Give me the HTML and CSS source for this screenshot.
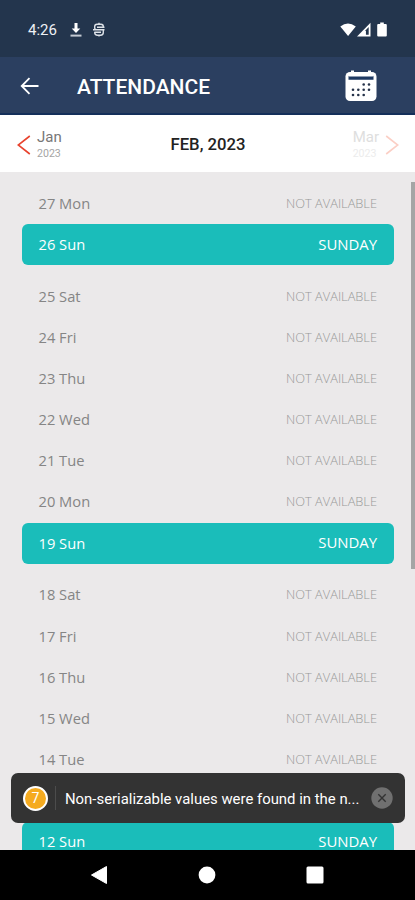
FILE: index.html
```html
<!DOCTYPE html>
<html lang="en">

<head>
  <meta charset="UTF-8">
  <meta name="viewport" content="width=device-width, initial-scale=1.0">
  <title>Attendance</title>
  <link rel="stylesheet" href="styles.css">
</head>

<body>
  <div class="screen">

    <div class="status-bar">
      <span class="time">4:26</span>
      <svg class="download" width="12" height="16" viewBox="0 0 12 16">
        <path d="M4.5 1h3v5.500h2.800L6 11 1.700 6.500h2.800z" fill="#fff" />
        <path d="M.5 13.600h11" stroke="#c3cad3" stroke-width="2" />
      </svg>
      <svg class="sync" width="12" height="16" viewBox="0 0 12 16" fill="none" stroke="#dde2e8" stroke-width="1.400">
        <path d="M10.300 6V4.500Q10.300 2.300 8 2.300H4Q1.700 2.300 1.700 4.500V6Q1.700 7.800 3.500 7.800H10.300V10.500Q10.300 13.200 7.500 13.200H4.500Q1.700 13.200 1.700 10.500V9.800M0 7.800H11.500M4 5.300H11.500M1.700 10.300H8M6 .8V2.300M6 13.200V14.500" />
      </svg>
      <svg class="signal" width="48" height="16" viewBox="0 0 48 16">
        <path d="M.3 4.500Q8 -1.500 15.800 4.500L8.100 14z" fill="#fff" />
        <path d="M30.500.8V14.500H17z" fill="#fff" />
        <path d="M28.700 5v7.800h-3.300V8.500z" fill="#23354d" />
        <path d="M25.400 9v5" stroke="#fff" stroke-width="1" />
        <path d="M40.200.5h3.600v1.500h2q1 0 1 1v10.500q0 1-1 1h-7.600q-1 0-1-1V3q0-1 1-1h2z" fill="#fff" />
      </svg>
    </div>

    <div class="header">
      <svg class="back" width="20" height="18" viewBox="0 0 20 18" fill="none" stroke="#fff" stroke-width="1.800">
        <path d="M18.500 9H2M9.500 1.200L1.700 9l7.800 7.800" />
      </svg>
      <h1>ATTENDANCE</h1>
      <svg class="calendar" width="32" height="32" viewBox="0 0 32 32">
        <rect x=".5" y="2" width="31" height="29" rx="4.500" fill="#fff" />
        <path d="M7.500.5v4M24.500.5v4" stroke="#fff" stroke-width="3" />
        <path d="M3.500 5.500q0 1 1 1h23q1 0 1-1v4.200h-25z" fill="#1e3962" />
        <g fill="#26334a">
          <circle cx="18.700" cy="14.500" r="1.300" /><circle cx="24" cy="14.500" r="1.300" />
          <circle cx="8" cy="19.800" r="1.300" /><circle cx="13.300" cy="19.800" r="1.300" />
          <circle cx="18.700" cy="19.800" r="1.300" /><circle cx="24" cy="19.800" r="1.300" />
          <circle cx="8" cy="25" r="1.300" /><circle cx="13.300" cy="25" r="1.300" />
          <circle cx="18.700" cy="25" r="1.300" />
        </g>
      </svg>
    </div>

    <div class="month-bar">
      <div class="month prev">
        <svg width="14" height="20" viewBox="0 0 14 20" fill="none" stroke="#e8432e" stroke-width="1.600">
          <path d="M12.800 1L1.200 10l11.600 9" />
        </svg>
        <div>
          <p class="name">Jan</p>
          <p class="year">2023</p>
        </div>
      </div>
      <h2>FEB, 2023</h2>
      <div class="month next">
        <div>
          <p class="name">Mar</p>
          <p class="year">2023</p>
        </div>
        <svg width="14" height="20" viewBox="0 0 14 20" fill="none" stroke="#fbcfc5" stroke-width="1.600">
          <path d="M1.200 1l11.600 9L1.200 19" />
        </svg>
      </div>
    </div>

    <div class="list">
      <div class="day"><span>27 Mon</span><span class="status">NOT AVAILABLE</span></div>
      <div class="day sunday"><span>26 Sun</span><span class="status">SUNDAY</span></div>
      <div class="day"><span>25 Sat</span><span class="status">NOT AVAILABLE</span></div>
      <div class="day"><span>24 Fri</span><span class="status">NOT AVAILABLE</span></div>
      <div class="day"><span>23 Thu</span><span class="status">NOT AVAILABLE</span></div>
      <div class="day"><span>22 Wed</span><span class="status">NOT AVAILABLE</span></div>
      <div class="day"><span>21 Tue</span><span class="status">NOT AVAILABLE</span></div>
      <div class="day"><span>20 Mon</span><span class="status">NOT AVAILABLE</span></div>
      <div class="day sunday"><span>19 Sun</span><span class="status">SUNDAY</span></div>
      <div class="day"><span>18 Sat</span><span class="status">NOT AVAILABLE</span></div>
      <div class="day"><span>17 Fri</span><span class="status">NOT AVAILABLE</span></div>
      <div class="day"><span>16 Thu</span><span class="status">NOT AVAILABLE</span></div>
      <div class="day"><span>15 Wed</span><span class="status">NOT AVAILABLE</span></div>
      <div class="day"><span>14 Tue</span><span class="status">NOT AVAILABLE</span></div>
      <div class="day blank"></div>
      <div class="day sunday"><span>12 Sun</span><span class="status">SUNDAY</span></div>
      <div class="scrollbar"></div>

      <div class="toast">
        <span class="count">7</span>
        <span class="message">Non-serializable values were found in the n...</span>
        <svg class="close" width="22" height="22" viewBox="0 0 22 22">
          <circle cx="11" cy="11" r="10.700" fill="#707070" />
          <path d="M7.300 7.300l7.400 7.400M14.700 7.300l-7.400 7.400" stroke="#333" stroke-width="1.400" />
        </svg>
      </div>
    </div>

    <div class="nav-bar">
      <svg width="18" height="20" viewBox="0 0 18 20"><path d="M16.500 1.500v17L1.500 10z" fill="#fff" stroke="#fff" stroke-linejoin="round" /></svg>
      <svg width="18" height="18" viewBox="0 0 18 18"><circle cx="9" cy="9" r="8.400" fill="#fff" /></svg>
      <svg width="18" height="18" viewBox="0 0 18 18"><rect x=".5" y=".5" width="17" height="17" rx="1.500" fill="#fff" /></svg>
    </div>

  </div>
</body>

</html>
```
FILE: styles.css
```css
* {
  margin: 0px;
  padding: 0px;
  box-sizing: border-box;
}

body {
  font-family: Roboto, sans-serif;
}

svg {
  display: block;
  flex-shrink: 0;
}

.screen {
  width: 415px;
  height: 900px;
  display: flex;
  flex-direction: column;
  overflow: hidden;
}

.status-bar {
  height: 57px;
  display: flex;
  align-items: center;
  padding: 3px 28px 0 28px;
  background: #23354d;
  color: #eef1f5;
}

.time {
  width: 42px;
  font-size: 15px;
}

.sync {
  margin-left: 11px;
}

.signal {
  margin-left: auto;
  margin-right: -1px;
}

.header {
  height: 58px;
  display: flex;
  align-items: center;
  padding: 1px 38px 0 20px;
  background: #2b3f60;
  border-bottom: 2px solid #142f5a;
  color: #fff;
}

.header h1 {
  margin-left: 37px;
  padding-top: 2px;
  font-size: 21px;
  font-weight: 500;
}

.calendar {
  margin-left: auto;
}

.month-bar {
  height: 57px;
  display: flex;
  align-items: center;
  justify-content: space-between;
  padding: 2px 16px 0 17px;
  background: #fff;
}

.month-bar h2 {
  font-size: 16.7px;
  font-weight: 500;
  color: #222;
}

.month {
  width: 80px;
  display: flex;
  align-items: center;
  gap: 6px;
}

.name {
  font-size: 15px;
  line-height: 18px;
  color: #777;
}

.year {
  font-size: 10.6px;
  line-height: 16px;
  color: #a5a5a5;
}

.next {
  justify-content: flex-end;
}

.next .name {
  color: #dedede;
}

.next .year {
  color: #ececec;
}

.list {
  position: relative;
  height: 678px;
  padding: 11px 21px 0 22px;
  background: #ebe9ea;
  overflow: hidden;
  font-family: "Open Sans", sans-serif;
}

.day {
  height: 41.15px;
  display: flex;
  align-items: center;
  justify-content: space-between;
  padding: 0 17px 1px 16.5px;
  font-size: 14.7px;
  line-height: 1;
  color: #858585;
}

.status {
  font-size: 12.8px;
  font-weight: 300;
  color: #999;
}

.sunday {
  margin-bottom: 10.75px;
  border-radius: 6px;
  background: #1abdba;
  color: #fff;
}

.sunday .status {
  font-size: 14.9px;
  font-weight: 400;
  color: #fff;
}

.scrollbar {
  position: absolute;
  top: 10px;
  right: 0;
  width: 4px;
  height: 387px;
  background: #a5a5a5;
}

/* warning shown on top of the list */
.toast {
  position: absolute;
  left: 11px;
  right: 10px;
  bottom: 27px;
  height: 50px;
  display: flex;
  align-items: center;
  padding: 0 12px;
  border-radius: 7px;
  background: #333;
  font-family: Roboto, sans-serif;
}

.count {
  width: 25px;
  height: 25px;
  border: 2px solid #fff;
  border-radius: 50%;
  background: #f5ab20;
  color: #fff;
  font-size: 14px;
  line-height: 21px;
  text-align: center;
}

.message {
  margin-left: 7px;
  padding: 4px 0 2px 9px;
  border-left: 1px solid #4c4c4c;
  color: #fff;
  font-size: 14.9px;
  white-space: nowrap;
}

.close {
  margin-left: auto;
}

.nav-bar {
  height: 50px;
  display: flex;
  align-items: center;
  justify-content: space-between;
  padding: 0 91px 0 90px;
  background: #000;
}
```
